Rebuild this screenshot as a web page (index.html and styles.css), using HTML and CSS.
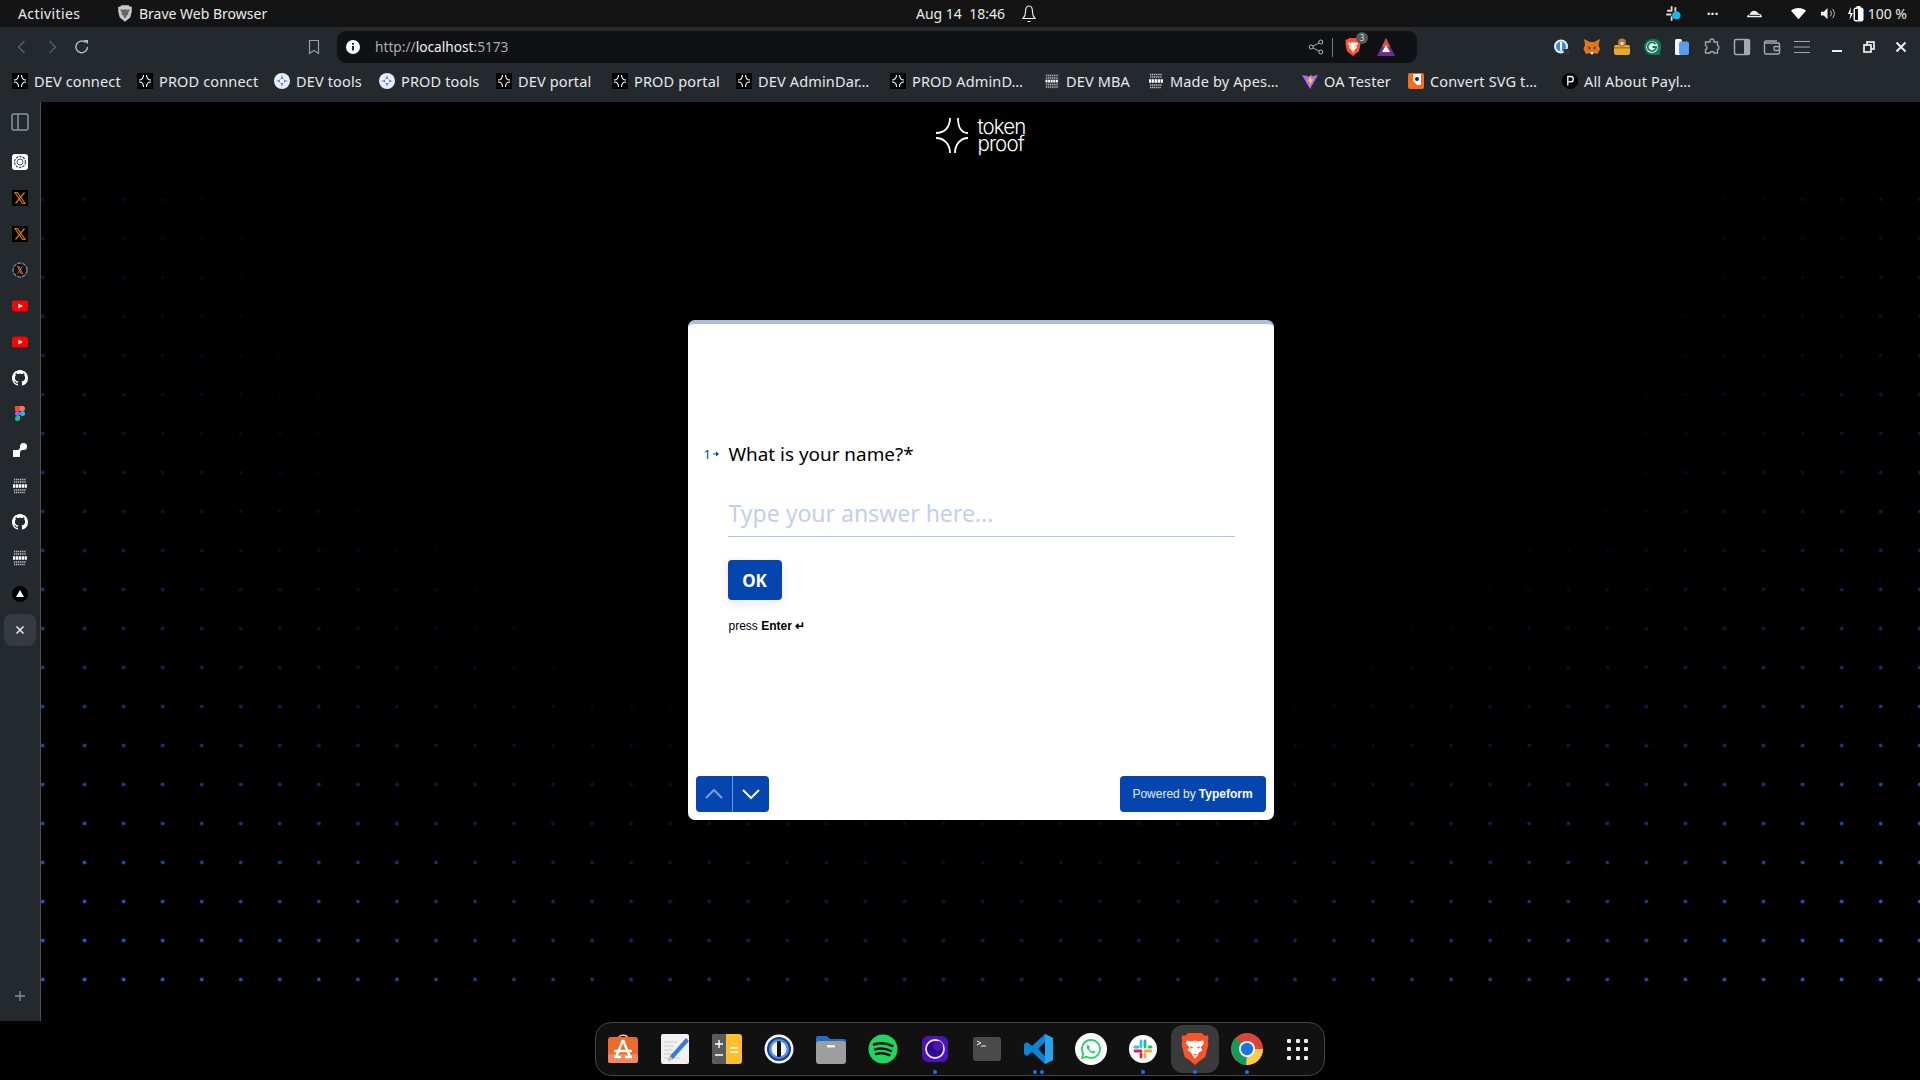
FILE: index.html
```html
<!DOCTYPE html>
<html lang="en">
<head>
<meta charset="utf-8">
<title>Brave Web Browser</title>
<link rel="stylesheet" href="styles.css">
</head>
<body>
<svg class="defs" aria-hidden="true">
  <symbol id="tp" viewBox="0 0 16 16"><rect width="16" height="16" fill="#000"/><path d="M6.500 2c0 3-1.500 5-4.500 5M9.500 2c0 3 1.500 5 4.500 5M2 9c3 0 4.500 2 4.500 5M14 9c-3 0-4.500 2-4.500 5" fill="none" stroke="#fff" stroke-width="1.100"/></symbol>
  <symbol id="tools" viewBox="0 0 16 16"><circle cx="8" cy="8" r="8" fill="#e8eefc"/><path d="M8 1.500C8.500 6 10 7.500 14.500 8 10 8.500 8.500 10 8 14.500 7.500 10 6 8.500 1.500 8 6 7.500 7.500 6 8 1.500Z" fill="#3f74e8"/><circle cx="8" cy="8" r="2.200" fill="#fff"/></symbol>
  <symbol id="apes" viewBox="0 0 16 16"><rect width="16" height="16" fill="#2b2f33"/><path d="M2 2.500h12M2 5h12M2 11.500h12M2 14h12" stroke="#bbb" stroke-width="1.600" stroke-dasharray="1.200 .7"/><path d="M1.500 8.200h13" stroke="#fff" stroke-width="2.800" stroke-dasharray="2 .6"/></symbol>
  <symbol id="apes-l" viewBox="0 0 16 16"><path d="M2 1.500h12M2 4h12M2 12h12M2 14.500h11" stroke="#c4c4c4" stroke-width="1.700" stroke-dasharray="1.200 .7"/><path d="M1 8h14" stroke="#fff" stroke-width="3.400" stroke-dasharray="2.300 .6"/></symbol>
  <symbol id="gh" viewBox="0 0 16 16"><path fill="#fff" d="M8 0C3.580 0 0 3.580 0 8c0 3.540 2.290 6.530 5.470 7.590.4.070.55-.17.55-.38 0-.19-.01-.82-.01-1.490-2.010.37-2.530-.49-2.690-.94-.09-.23-.48-.94-.82-1.130-.28-.15-.68-.52-.01-.53.63-.01 1.080.58 1.230.82.72 1.210 1.870.87 2.330.66.070-.52.28-.87.51-1.070-1.780-.2-3.640-.89-3.640-3.950 0-.87.31-1.590.82-2.150-.08-.2-.36-1.020.08-2.120 0 0 .67-.21 2.200.82.64-.18 1.320-.27 2-.27.68 0 1.360.09 2 .27 1.530-1.040 2.200-.82 2.200-.82.44 1.100.16 1.920.08 2.120.51.56.82 1.270.82 2.150 0 3.070-1.870 3.750-3.650 3.950.29.25.54.73.54 1.480 0 1.070-.01 1.930-.01 2.200 0 .21.15.46.55.38A8.013 8.013 0 0016 8c0-4.420-3.580-8-8-8z"/></symbol>
  <symbol id="x" viewBox="0 0 16 16"><rect width="16" height="16" fill="#000"/><path d="M3 2.500h2.500l7.500 11h-2.500zM12.500 2.500 3.500 13.500" fill="none" stroke="#d9730f" stroke-width="1.200"/></symbol>
  <symbol id="yt" viewBox="0 0 16 16"><rect y="2.500" width="16" height="11" rx="3" fill="#f00"/><path d="M6.300 5.500v5L11 8z" fill="#fff"/></symbol>
  <symbol id="brave" viewBox="0 0 24 28"><path d="M6 0h12l2.500 2.500 2.500-.500 1 2.500-1 2.500 1 2-3 12-5 3.500-4 3.500-4-3.500-5-3.500-3-12 1-2-1-2.500L1 2l2.500.5z" fill="#fb542b"/><path d="M12 6.500 8.500 7.500 5 6.500 4 9l3 3.500-1.500 2.500 3 2 1.500 3 2 2.500 2-2.500 1.500-3 3-2-1.500-2.500L20 9l-1-2.500-3.500 1z" fill="#fff"/><path d="M7.500 11.500l3 1-2 1.200zM16.500 11.500l-3 1 2 1.200zM10 18.500h4l-2 1.500zM12 8v6" fill="#fb542b"/></symbol>
</svg>

<header class="topbar">
  <div class="top-left">
    <span class="activities">Activities</span>
    <svg class="ic-top-brave" viewBox="0 0 24 28"><path d="M6 0h12l2.500 2.500 2.500-.500 1 2.500-1 2.500 1 2-3 12-5 3.500-4 3.500-4-3.500-5-3.500-3-12 1-2-1-2.500L1 2l2.500.5z" fill="#c9c9c9"/><path d="M12 6.500 8.500 7.500 5 6.500 4 9l3 3.500-1.500 2.500 3 2 1.500 3 2 2.500 2-2.500 1.500-3 3-2-1.500-2.500L20 9l-1-2.500-3.500 1z" fill="#666"/></svg>
    <span>Brave Web Browser</span>
  </div>
  <div class="top-center">
    <span class="clock">Aug 14&nbsp;&nbsp;18:46</span>
    <svg class="bell" viewBox="0 0 14 18"><path d="M7 1C4 1 3.500 4 3.500 7c0 3-1 5-2.500 6.500h12C11.500 12 10.500 10 10.500 7 10.500 4 10 1 7 1ZM5.500 16.500h3" fill="none" stroke="#eee" stroke-width="1.100"/></svg>
  </div>
  <div class="top-right">
    <svg class="tray" viewBox="0 0 16 16"><path d="M2 5h4M6 1v3M10 2v3M1 9h4M6 12v3" stroke="#d8d8d8" stroke-width="2" stroke-linecap="round"/><circle cx="11" cy="10" r="4.500" fill="#19b5e8"/></svg>
    <span class="tray-dots">···</span>
    <svg class="tray" viewBox="0 0 16 16"><path d="M0 12c0-2 1-3 3-3 .5-2.500 2.500-4 4.500-4s3.500 1 4.500 3c2 0 4 1.500 4 4z" fill="#eee"/><path d="M2 10h12" stroke="#141414"/></svg>
    <svg class="tray" viewBox="0 0 16 16"><path d="M0 5c4-4 12-4 16 0l-8 9z" fill="#fff"/></svg>
    <svg class="tray tray-vol" viewBox="0 0 16 16"><path d="M1 6h3l4-4v12l-4-4H1z" fill="#eee"/><path d="M11 5c1.500 1.500 1.500 4.500 0 6M13 3c3 2.500 3 7.500 0 10" fill="none" stroke="#ccc"/></svg>
    <span class="batt"><svg class="tray-b" viewBox="0 0 20 16"><path d="M3 1 0 8h2.500L1.500 14 5 7H2.500z" fill="#fff"/><rect x="6" y="2" width="9" height="13" rx="1.500" fill="#fff" stroke="#fff"/><rect x="8.500" y="0" width="4" height="2" fill="#fff"/><rect x="7" y="3" width="3" height="11" fill="#141414"/></svg>100 %</span>
  </div>
</header>

<nav class="toolbar">
  <div class="nav-group">
    <span class="tb"><svg class="i16" viewBox="0 0 16 16"><path d="M10.500 2 4.500 8l6 6" fill="none" stroke="#5a6066" stroke-width="1.300"/></svg></span>
    <span class="tb"><svg class="i16" viewBox="0 0 16 16"><path d="M5.500 2l6 6-6 6" fill="none" stroke="#5a6066" stroke-width="1.300"/></svg></span>
    <span class="tb"><svg class="i16" viewBox="0 0 16 16"><path d="M13.500 8A5.800 5.800 0 1 1 11.500 3.500" fill="none" stroke="#b9bdc1" stroke-width="1.400"/><path d="M9.500 1h4.500v4z" fill="#b9bdc1"/></svg></span>
  </div>
  <span class="tb bookmark-btn"><svg class="i16" viewBox="0 0 16 16"><path d="M3.500 1.500h9v13L8 11.500l-4.500 3z" fill="none" stroke="#9a9fa4" stroke-width="1.200"/></svg></span>
  <div class="address">
    <svg class="i14" viewBox="0 0 14 14"><circle cx="7" cy="7" r="7" fill="#fff"/><path d="M7 6v4.500M7 3v1.800" stroke="#0f1115" stroke-width="1.800"/></svg>
    <span class="url"><span class="dim">http://</span>localhost<span class="dim">:5173</span></span>
    <div class="addr-right">
      <svg class="i16" viewBox="0 0 16 16"><path d="M12.500 3 3.500 8l9 5" fill="none" stroke="#aaa"/><circle cx="12.800" cy="3" r="2" fill="#0f1115" stroke="#bbb"/><circle cx="3.200" cy="8" r="2" fill="#0f1115" stroke="#bbb"/><circle cx="12.800" cy="13" r="2" fill="#0f1115" stroke="#bbb"/></svg>
      <span class="addr-div"></span>
      <span class="shield"><svg class="i18" viewBox="0 0 24 28"><use href="#brave"/></svg><span class="badge">3</span></span>
      <svg class="i18 tri" viewBox="0 0 18 18"><path d="M9 0 18 18H0z" fill="#6b2f8f"/><path d="M9 0 13 9H5z" fill="#e8502c"/><path d="M9 7l4 7H5z" fill="#fff"/></svg>
    </div>
  </div>
  <div class="ext-group">
    <span class="tb"><svg class="i16" viewBox="0 0 16 16"><circle cx="7" cy="7.500" r="7" fill="#e6f0ff"/><circle cx="7" cy="7.500" r="5" fill="#3f86e8"/><rect x="6" y="3" width="2" height="9" fill="#fff"/><rect x="9.500" y="10" width="6" height="5.500" rx="1" fill="#333"/></svg></span>
    <span class="tb"><svg class="i18" viewBox="0 0 18 18"><path d="M1 1 7 4h4l6-3-1.500 6 1.500 4-2.500 5-4-1-1 1H8l-1-1-4 1-2.500-5 1.500-4z" fill="#e2761b"/><path d="M5 8l3 2-2 2zM13 8l-3 2 2 2z" fill="#5b3a1e"/><path d="M7 14l2 3 2-3z" fill="#f5f5f5"/></svg></span>
    <span class="tb"><svg class="i18" viewBox="0 0 18 18"><rect x="1" y="7" width="16" height="10" rx="2" fill="#e6a92a"/><rect x="1" y="9" width="16" height="1.500" fill="#b27a14"/><circle cx="9" cy="4.500" r="4" fill="#b9763a"/><circle cx="9" cy="5.500" r="1.800" fill="#f0d9b5"/></svg></span>
    <span class="tb"><svg class="i18" viewBox="0 0 18 18"><path d="M9 1a8 8 0 1 0 0 16h8v-3.500A8 8 0 0 0 9 1Z" fill="#0c7a5b"/><circle cx="9" cy="9" r="6" fill="#eef7f2"/><path d="M12.500 6.200A4.300 4.300 0 1 0 13.300 9H9.500" fill="none" stroke="#0c7a5b" stroke-width="1.800"/></svg></span>
    <span class="tb"><svg class="i18" viewBox="0 0 18 18"><rect x="2" y="1" width="7" height="16" rx="1.500" fill="#f2f4f8"/><rect x="6" y="3.500" width="10" height="13.500" rx="2" fill="#5a9bf0"/></svg></span>
    <span class="tb"><svg class="i18" viewBox="0 0 18 18"><path d="M7 2.500c0-2 4-2 4 0V4h3.500v3.500c2 0 2 4 0 4V15H11c0-2-4-2-4 0H2.500v-3.500c2 0 2-4 0-4V4H7z" fill="none" stroke="#a4a9ad" stroke-width="1.300"/></svg></span>
    <span class="tb"><svg class="i18" viewBox="0 0 18 18"><rect x="1.500" y="1.500" width="15" height="15" rx="1.500" fill="none" stroke="#a4a9ad" stroke-width="1.500"/><rect x="11" y="2" width="5" height="14" fill="#a4a9ad"/></svg></span>
    <span class="tb"><svg class="i18" viewBox="0 0 18 18"><path d="M14 3H3a1.500 1.500 0 0 0-1.500 1.500v10A1.500 1.500 0 0 0 3 16h12a1.500 1.500 0 0 0 1.500-1.500v-8A1.500 1.500 0 0 0 15 5H2" fill="none" stroke="#a4a9ad" stroke-width="1.400"/><rect x="11" y="8.500" width="5.500" height="4" rx="1" fill="none" stroke="#a4a9ad" stroke-width="1.300"/></svg></span>
    <span class="tb"><svg class="i16" viewBox="0 0 16 16"><path d="M0 2.500h16M0 8h16M0 13.500h16" stroke="#a4a9ad" stroke-width="1.200"/></svg></span>
  </div>
  <div class="win-group">
    <span class="win"><svg class="i12" viewBox="0 0 12 12"><path d="M1 10h10" stroke="#eee" stroke-width="2"/></svg></span>
    <span class="win"><svg class="i12" viewBox="0 0 12 12"><rect x="4" y="1" width="7" height="7" fill="none" stroke="#eee" stroke-width="1.700"/><rect x="1" y="4" width="7" height="7" fill="#24292d" stroke="#eee" stroke-width="1.700"/></svg></span>
    <span class="win"><svg class="i12" viewBox="0 0 12 12"><path d="M1.500 1.500l9 9M10.500 1.500l-9 9" stroke="#eee" stroke-width="2"/></svg></span>
  </div>
</nav>

<div class="bookmarks">
  <a class="bm"><svg class="i16"><use href="#tp"/></svg>DEV connect</a>
  <a class="bm"><svg class="i16"><use href="#tp"/></svg>PROD connect</a>
  <a class="bm"><svg class="i16"><use href="#tools"/></svg>DEV tools</a>
  <a class="bm"><svg class="i16"><use href="#tools"/></svg>PROD tools</a>
  <a class="bm"><svg class="i16"><use href="#tp"/></svg>DEV portal</a>
  <a class="bm"><svg class="i16"><use href="#tp"/></svg>PROD portal</a>
  <a class="bm"><svg class="i16"><use href="#tp"/></svg>DEV AdminDar…</a>
  <a class="bm"><svg class="i16"><use href="#tp"/></svg>PROD AdminD…</a>
  <a class="bm"><svg class="i16"><use href="#apes"/></svg>DEV MBA</a>
  <a class="bm"><svg class="i16"><use href="#apes-l"/></svg>Made by Apes…</a>
  <a class="bm"><svg class="i16" viewBox="0 0 16 16"><path d="M0 2 8 3.500 16 2 8 16z" fill="#a86bf5"/><path d="M9.500 1 5.500 8.500H8L7 13.500l4.500-7.500H9z" fill="#ffc928"/></svg>OA Tester</a>
  <a class="bm"><svg class="i16" viewBox="0 0 16 16"><rect width="16" height="16" rx="2" fill="#f56a1d"/><path d="M5 1h8v11H9L5 8z" fill="#fff"/><circle cx="9" cy="6" r="2" fill="#222"/></svg>Convert SVG t…</a>
  <a class="bm"><svg class="i16" viewBox="0 0 16 16"><circle cx="8" cy="8" r="8" fill="#000"/><path d="M5.800 12.500v-9h2.800a2.600 2.600 0 0 1 0 5.400H5.800" fill="none" stroke="#fff" stroke-width="1.300"/></svg>All About Payl…</a>
</div>

<div class="workspace">
  <aside class="sidebar">
    <span class="side first"><svg class="i18" viewBox="0 0 18 18"><rect x="1" y="1" width="16" height="16" rx="2" fill="none" stroke="#8b949a" stroke-width="1.500"/><path d="M7 1v16" stroke="#8b949a" stroke-width="1.500"/><path d="M4 5h.1M4 8h.1M4 11h.1" stroke="#8b949a" stroke-width="2"/></svg></span>
    <span class="side"><svg class="i16" viewBox="0 0 16 16"><rect width="16" height="16" rx="3" fill="#fff"/><circle cx="8" cy="8" r="5.500" fill="none" stroke="#555" stroke-width="1.300" stroke-dasharray="2.500 1"/><circle cx="8" cy="8" r="3" fill="none" stroke="#555"/></svg></span>
    <span class="side"><svg class="i16"><use href="#x"/></svg></span>
    <span class="side"><svg class="i16"><use href="#x"/></svg></span>
    <span class="side"><svg class="i16" viewBox="0 0 16 16"><circle cx="8" cy="8" r="7" fill="#111" stroke="#7b8288" stroke-width="1.400" stroke-dasharray="4 1"/><path d="M5.500 4.500h1.500L10.500 11.500H9zM10.500 4.500l-5 7" fill="none" stroke="#d9730f"/></svg></span>
    <span class="side"><svg class="i16"><use href="#yt"/></svg></span>
    <span class="side"><svg class="i16"><use href="#yt"/></svg></span>
    <span class="side"><svg class="i16"><use href="#gh"/></svg></span>
    <span class="side"><svg class="i16" viewBox="0 0 16 16"><path d="M3 0h5v5H3z" fill="#f24e1e"/><path d="M8 0h2.500a2.500 2.500 0 0 1 0 5H8z" fill="#ff7262"/><rect x="3" y="5" width="5" height="5" rx="2.500" fill="#a259ff"/><circle cx="10.500" cy="7.500" r="2.500" fill="#1abcfe"/><path d="M5.500 10H8v2.500A2.500 2.500 0 1 1 5.500 10z" fill="#0acf83"/></svg></span>
    <span class="side"><svg class="i16" viewBox="0 0 16 16"><rect x="1" y="8" width="7" height="7" fill="#fff"/><circle cx="11.500" cy="4.500" r="3.500" fill="#fff"/><path d="M6 10l5-5" stroke="#fff" stroke-width="2.500"/></svg></span>
    <span class="side"><svg class="i16"><use href="#apes-l"/></svg></span>
    <span class="side"><svg class="i16"><use href="#gh"/></svg></span>
    <span class="side"><svg class="i16"><use href="#apes-l"/></svg></span>
    <span class="side"><svg class="i16" viewBox="0 0 16 16"><circle cx="8" cy="8" r="8" fill="#000"/><path d="M8 4l4 7H4z" fill="#fff"/></svg></span>
    <span class="side selected"><svg class="i10" viewBox="0 0 10 10"><path d="M1.500 1.500l7 7M8.500 1.500l-7 7" stroke="#e8e8e8" stroke-width="1.500"/></svg></span>
    <span class="side plus"><svg class="i12" viewBox="0 0 12 12"><path d="M6 1v10M1 6h10" stroke="#8a8f93" stroke-width="1.300"/></svg></span>
  </aside>

  <main class="stage">
    <div class="logo">
      <svg class="logo-mark" viewBox="0 0 32 35"><path d="M14 0C14 9 9 15 0 15M22 0C22 9 25 15 32 15M0 20C8 20 14 26 14 35M32 20C25 20 19 26 19 35" fill="none" stroke="#fff" stroke-width="1.800"/></svg>
      <span class="logo-text"><span class="logo-line">token</span><span class="logo-line">proof</span></span>
    </div>
    <section class="card">
      <div class="q-row">
        <span class="q-num">1<svg class="q-arrow" viewBox="0 0 8 8"><path d="M1 4h4" stroke="#0445af" stroke-width="1.200"/><path d="M4 1.500 7 4 4 6.500z" fill="#0445af"/></svg></span>
        <h1 class="q-text">What is your name?*</h1>
      </div>
      <div class="answer">
        <input class="field" type="text" placeholder="Type your answer here...">
        <button class="ok" type="button">OK</button>
        <p class="hint">press <b>Enter&nbsp;↵</b></p>
      </div>
      <div class="card-foot">
        <div class="pager">
          <span class="pg"><svg class="chev" viewBox="0 0 20 12"><path d="M2 10 10 2l8 8" fill="none" stroke="#7e9cd6" stroke-width="2"/></svg></span>
          <span class="pg"><svg class="chev" viewBox="0 0 20 12"><path d="M2 2l8 8 8-8" fill="none" stroke="#fff" stroke-width="2"/></svg></span>
        </div>
        <a class="powered">Powered by <b>Typeform</b></a>
      </div>
    </section>
  </main>
</div>

<footer class="dock-row">
  <div class="dock">
    <span class="app"><svg class="i30" viewBox="0 0 30 30"><path d="M10 5c0-5 10-5 10 0" fill="none" stroke="#f2c9a8" stroke-width="1.300"/><rect y="3" width="30" height="26" rx="3" fill="#ee6a2c"/><rect y="20" width="30" height="9" rx="2" fill="#f08a5a"/><path d="M15 6 8 23M15 6l7 17M6 17h18M6 23h7M17 23h7" fill="none" stroke="#fff" stroke-width="2.400"/></svg></span>
    <span class="app"><svg class="i30" viewBox="0 0 30 30"><rect x="1" width="28" height="30" rx="2" fill="#f1f1f1"/><path d="M4 8h13M4 12h10M4 16h8M4 20h12M4 24h16" stroke="#c9c9c9"/><path d="M26 4 10 22l-2 5 5-2 16-18z" fill="#3a77d8"/><path d="M10 22l-2 5 5-2z" fill="#e9c28a"/></svg></span>
    <span class="app"><svg class="i30" viewBox="0 0 30 30"><rect width="30" height="30" rx="3" fill="#ffbe2c"/><path d="M3 0h11v30H3a3 3 0 0 1-3-3V3a3 3 0 0 1 3-3Z" fill="#5a5a5a"/><path d="M3 10h8M7 6v8M3 21h8M18 14h8M18 18h8" stroke="#fff" stroke-width="1.400"/></svg></span>
    <span class="app"><svg class="i30" viewBox="0 0 30 30"><circle cx="15" cy="15" r="14.500" fill="#f4f6fb"/><circle cx="15" cy="15" r="12" fill="#1a3c8e"/><circle cx="15" cy="15" r="10" fill="#4d8ef0"/><circle cx="15" cy="15" r="7.500" fill="#f4f6fb"/><rect x="13" y="7" width="4" height="16" rx="1.500" fill="#111"/></svg></span>
    <span class="app"><svg class="i30" viewBox="0 0 30 30"><path d="M0 4a2 2 0 0 1 2-2h9l3 3h14a2 2 0 0 1 2 2v6H0z" fill="#1d6fd8"/><rect y="7" width="30" height="23" rx="3" fill="#9e9e9e"/><rect x="11" y="11" width="8" height="2.500" fill="#eee"/></svg></span>
    <span class="app"><svg class="i30" viewBox="0 0 30 30"><circle cx="15" cy="15" r="14.500" fill="#1ed760"/><path d="M6 10.500c6-2 13-1.500 18.500 1.500M7 15.500c5-1.500 11-1 16 1.500M8 20c4-1 9-.8 13.500 1.200" fill="none" stroke="#111" stroke-width="2.500" stroke-linecap="round"/></svg></span>
    <span class="app dot"><svg class="i30" viewBox="0 0 30 30"><rect x="2" y="2" width="26" height="26" rx="6" fill="#4b13b8"/><circle cx="15" cy="15" r="9" fill="#2a0a8a" stroke="#e9e4ff" stroke-width="1.800"/><circle cx="18" cy="12" r="5" fill="#4b13b8"/></svg></span>
    <span class="app"><svg class="i30" viewBox="0 0 30 30"><rect x="1" y="3" width="28" height="24" rx="3" fill="#4a4a4a"/><path d="M5 7l4 2-4 2M9 12h5" fill="none" stroke="#eee"/></svg></span>
    <span class="app dot two"><svg class="i30" viewBox="0 0 30 30"><path d="M21 0 29 4v22l-8 4L8 18l-5 4-3-2v-10l3-2 5 4zM21 8l-7 7 7 7z" fill="#0a84d6" fill-rule="evenodd"/><path d="M21 0l8 4v22l-8 4z" fill="#27a2ef"/></svg></span>
    <span class="app"><svg class="i32" viewBox="0 0 32 32"><circle cx="16" cy="16" r="16" fill="#fff"/><path d="M16 7a9 9 0 0 0-7.700 13.700L7 25l4.500-1.200A9 9 0 1 0 16 7Z" fill="none" stroke="#25d366" stroke-width="1.800"/><path d="M12.500 11.500c-1.500 1.500-1 4 1.500 6.500s5 3 6.500 1.500l-2-2-1.500 1c-1.200-.6-2.400-1.800-3-3l1-1.500z" fill="#25d366"/></svg></span>
    <span class="app dot"><svg class="i28" viewBox="0 0 28 28"><circle cx="14" cy="14" r="14" fill="#fff"/><path d="M12 6v6M6 12h3" stroke="#36c5f0" stroke-width="2.800" stroke-linecap="round"/><path d="M16 6v6M22 12h-2" stroke="#2eb67d" stroke-width="2.800" stroke-linecap="round"/><path d="M6 16h6M12 19v3" stroke="#e01e5a" stroke-width="2.800" stroke-linecap="round"/><path d="M16 16h6M16 19v3" stroke="#ecb22e" stroke-width="2.800" stroke-linecap="round"/></svg></span>
    <span class="app dot active"><svg class="i32" viewBox="0 0 24 28"><use href="#brave"/></svg></span>
    <span class="app dot"><svg class="i32" viewBox="0 0 32 32"><circle cx="16" cy="16" r="16" fill="#db4437"/><path d="M16 16 3 24A16 16 0 0 1 4 5z" fill="#0f9d58"/><path d="M16 16h16a16 16 0 0 1-17 16z" fill="#ffcd40"/><path d="M16 16 3 24a16 16 0 0 0 12 8z" fill="#0f9d58"/><circle cx="16" cy="16" r="8" fill="#fff"/><circle cx="16" cy="16" r="6.200" fill="#1a73e8"/></svg></span>
    <span class="app"><span class="grid9"><i></i><i></i><i></i><i></i><i></i><i></i><i></i><i></i><i></i></span></span>
  </div>
</footer>
</body>
</html>
```
FILE: styles.css
```css
* { box-sizing: border-box; }
html, body { margin: 0; padding: 0; }
body {
  width: 1920px;
  height: 1080px;
  overflow: hidden;
  background: #000;
  color: #e6e8ea;
  font-family: "Noto Sans", "Open Sans", sans-serif;
}
.defs { position: absolute; width: 0; height: 0; }
svg { display: block; flex: none; }
.i10 { width: 10px; height: 10px; }
.i12 { width: 12px; height: 12px; }
.i14 { width: 14px; height: 14px; }
.i16 { width: 16px; height: 16px; }
.i18 { width: 18px; height: 18px; }
.i28 { width: 28px; height: 28px; }
.i30 { width: 30px; height: 30px; }
.i32 { width: 32px; height: 32px; }

/* GNOME top bar */
.topbar {
  height: 27px;
  background: #141414;
  display: grid;
  grid-template-columns: 916px 1fr auto;
  align-items: center;
  font-size: 14px;
  color: #e9ebed;
}
.top-left { display: flex; align-items: center; padding-left: 18px; }
.activities { width: 62px; letter-spacing: .4px; white-space: nowrap; }
.ic-top-brave { width: 14px; height: 17px; margin: 0 7px 0 38px; }
.top-center { display: flex; align-items: center; gap: 17px; }
.bell { width: 14px; height: 18px; }
.top-right { display: flex; align-items: center; padding-right: 13px; }
.tray { width: 15px; height: 15px; margin-left: 29px; }
.tray:first-child { margin-left: 0; }
.tray.tray-vol { margin-left: 14px; }
.tray-dots { margin-left: 26px; width: 13px; font-weight: 700; letter-spacing: 0; }
.tray-dots + .tray { margin-left: 27px; }
.batt { display: flex; align-items: center; margin-left: 13px; }
.tray-b { width: 20px; height: 16px; }

/* Browser toolbar */
.toolbar {
  height: 36px;
  background: #24292d;
  display: flex;
  align-items: flex-start;
  padding: 4px 0 0 7px;
}
.nav-group, .ext-group, .win-group { display: flex; }
.tb { width: 30px; height: 32px; display: flex; align-items: center; justify-content: center; }
.bookmark-btn { margin-left: 202px; }
.address {
  margin-left: 8px;
  width: 1080px;
  height: 32px;
  border-radius: 9px;
  background: #0f1115;
  display: flex;
  align-items: center;
  padding: 0 22px 0 9px;
}
.url { margin-left: 15px; font-size: 13.700px; padding-bottom: 1px; color: #f0f1f2; }
.dim { color: #a9adb1; }
.addr-right { margin-left: auto; display: flex; align-items: center; }
.addr-div { width: 1px; height: 19px; background: #777; margin: 0 11px 0 8px; }
.shield { position: relative; display: block; }
.badge {
  position: absolute;
  left: 12px;
  top: -6px;
  width: 12px;
  height: 12px;
  border-radius: 50%;
  background: #55585c;
  font-size: 8px;
  line-height: 12px;
  text-align: center;
  color: #ddd;
}
.tri { margin-left: 15px; }
.ext-group { margin-left: 130px; }
.win-group { margin-left: 4px; }
.win { width: 32px; height: 32px; display: flex; align-items: center; justify-content: center; }

/* Bookmarks: the browser sizes each button to its label, capped at 154px */
.bookmarks {
  height: 39px;
  background: #24292d;
  display: grid;
  grid-template-columns: 125px 137px 105px 117px 116px 124px 154px 154px 104px 154px 106px 154px 1fr;
  align-items: center;
  padding: 0 0 3px 12px;
  font-size: 14.500px;
  letter-spacing: .15px;
  color: #e6e8ea;
}
.bm { display: flex; align-items: center; gap: 6px; white-space: nowrap; }

/* Sidebar and page */
.workspace { display: flex; height: 919px; }
.sidebar {
  width: 41px;
  flex: none;
  background: #24292d;
  border-right: 1px solid #4c5155;
  display: flex;
  flex-direction: column;
  align-items: center;
  padding: 2px 0 7px;
}
.side { width: 32px; height: 36px; flex: none; display: flex; align-items: center; justify-content: center; }
.side.first { margin-bottom: 4px; }
.selected { height: 32px; margin-top: 2px; border-radius: 8px; background: #353b41; }
.plus { margin-top: auto; }

.stage {
  position: relative;
  flex: 1;
  height: 897px;
  background: #000;
  display: flex;
  flex-direction: column;
  align-items: center;
  padding-top: 16px;
}
.stage::before {
  content: "";
  position: absolute;
  left: 24px;
  right: 0;
  top: 78px;
  bottom: 0;
  background:
    linear-gradient(to bottom, rgba(0,0,0,.6), rgba(0,0,0,0) 75%),
    radial-gradient(ellipse 1080px 860px at 915px 48px, rgba(0,0,0,1) 58%, rgba(0,0,0,.75) 80%, rgba(0,0,0,0) 118%),
    radial-gradient(circle, #2a62e6 1.300px, rgba(42,98,230,.45) 1.900px, rgba(42,98,230,0) 2.400px) 0 0 / 39.050px 39px;
}
.stage::after {
  content: "";
  position: absolute;
  left: 0;
  width: 24px;
  top: 78px;
  bottom: 0;
  background:
    linear-gradient(to bottom, rgba(0,0,0,.85), rgba(0,0,0,0) 100%),
    radial-gradient(circle, #2a62e6 1.300px, rgba(42,98,230,.45) 1.900px, rgba(42,98,230,0) 2.400px) -17.800px 0 / 39px 39px;
}
.logo, .card { position: relative; z-index: 1; }

.logo { display: flex; align-items: center; gap: 9px; height: 35px; margin-left: 1px; }
.logo-mark { width: 32px; height: 35px; }
.logo-text {
  margin-bottom: 2px;
  font-family: "Inter", sans-serif;
  font-weight: 300;
  font-size: 20.500px;
  letter-spacing: -.85px;
  color: #fff;
}
.logo-line { display: block; height: 17px; line-height: 17px; }

/* Typeform card */
.card {
  width: 586px;
  height: 500px;
  margin-top: 167px;
  background: #fff;
  border-top: 4px solid #a9c0e4;
  border-radius: 7px;
  overflow: hidden;
  display: flex;
  flex-direction: column;
  padding-top: 116px;
  color: #000;
}
.q-row { display: flex; align-items: center; height: 28px; padding-left: 16px; }
.q-num {
  width: 24px;
  display: flex;
  align-items: center;
  font-size: 13px;
  color: #0445af;
}
.q-arrow { width: 8px; height: 8px; margin-left: 1px; }
.q-text { margin: 0 0 0 1px; font-size: 18.900px; font-weight: 400; line-height: 28px; color: #000; }
.answer { padding: 0 39px 0 40px; }
.field {
  display: block;
  width: 100%;
  height: 40px;
  margin-top: 29px;
  padding: 0 0 7px 1px;
  border: 0;
  border-bottom: 1px solid #aec6ea;
  outline: 0;
  background: transparent;
  font-family: inherit;
  font-size: 23px;
  color: #000;
}
.field::placeholder { color: #c0d0ee; opacity: 1; }
.ok {
  display: block;
  width: 54px;
  height: 40px;
  margin-top: 23px;
  padding: 0;
  border: 0;
  border-radius: 4px;
  background: #0445af;
  box-shadow: 0 3px 12px rgba(0,0,0,.1);
  color: #fff;
  font-family: inherit;
  font-size: 17px;
  font-weight: 700;
}
.hint {
  margin: 18px 0 0;
  padding-left: 1px;
  font-family: "Liberation Sans", Arial, sans-serif;
  font-size: 12px;
  line-height: 16px;
  color: #000;
}
.card-foot {
  margin-top: auto;
  padding: 0 8px 8px;
  display: flex;
  justify-content: space-between;
}
.pager { display: flex; width: 73px; height: 36px; border-radius: 4px; overflow: hidden; background: #0445af; }
.pg { flex: 1; display: flex; align-items: center; justify-content: center; }
.pg:first-child { border-right: 1px solid #6e92d0; }
.chev { width: 20px; height: 12px; }
.powered {
  width: 146px;
  height: 36px;
  border-radius: 4px;
  background: #0445af;
  display: flex;
  align-items: center;
  justify-content: center;
  gap: 3px;
  font-family: "Liberation Sans", Arial, sans-serif;
  font-size: 12px;
  color: #e6ecf8;
}
.powered b { color: #fff; }

/* Dock */
.dock-row { height: 59px; display: flex; justify-content: center; padding-top: 1px; }
.dock {
  height: 54px;
  border: 1px solid #454545;
  border-radius: 16px;
  background: #111;
  display: grid;
  grid-template-columns: repeat(14, 52px);
  padding-left: 1px;
  width: 730px;
}
.app { position: relative; display: flex; align-items: center; justify-content: center; }
.app.dot::after {
  content: "";
  position: absolute;
  left: 50%;
  bottom: 1px;
  width: 4px;
  height: 4px;
  margin-left: -2px;
  border-radius: 50%;
  background: #1a73e8;
}
.app.two::after { margin-left: -6px; box-shadow: 7px 0 0 #1a73e8; }
.app.active::before {
  content: "";
  position: absolute;
  inset: 2px 2px;
  border-radius: 12px;
  background: #3a3a3a;
}
.app.active svg { position: relative; }
.grid9 { display: grid; grid-template-columns: repeat(3, 4px); gap: 4.500px; margin-right: 3px; }
.grid9 i { width: 4px; height: 4px; border-radius: 1px; background: #eee; }
```
